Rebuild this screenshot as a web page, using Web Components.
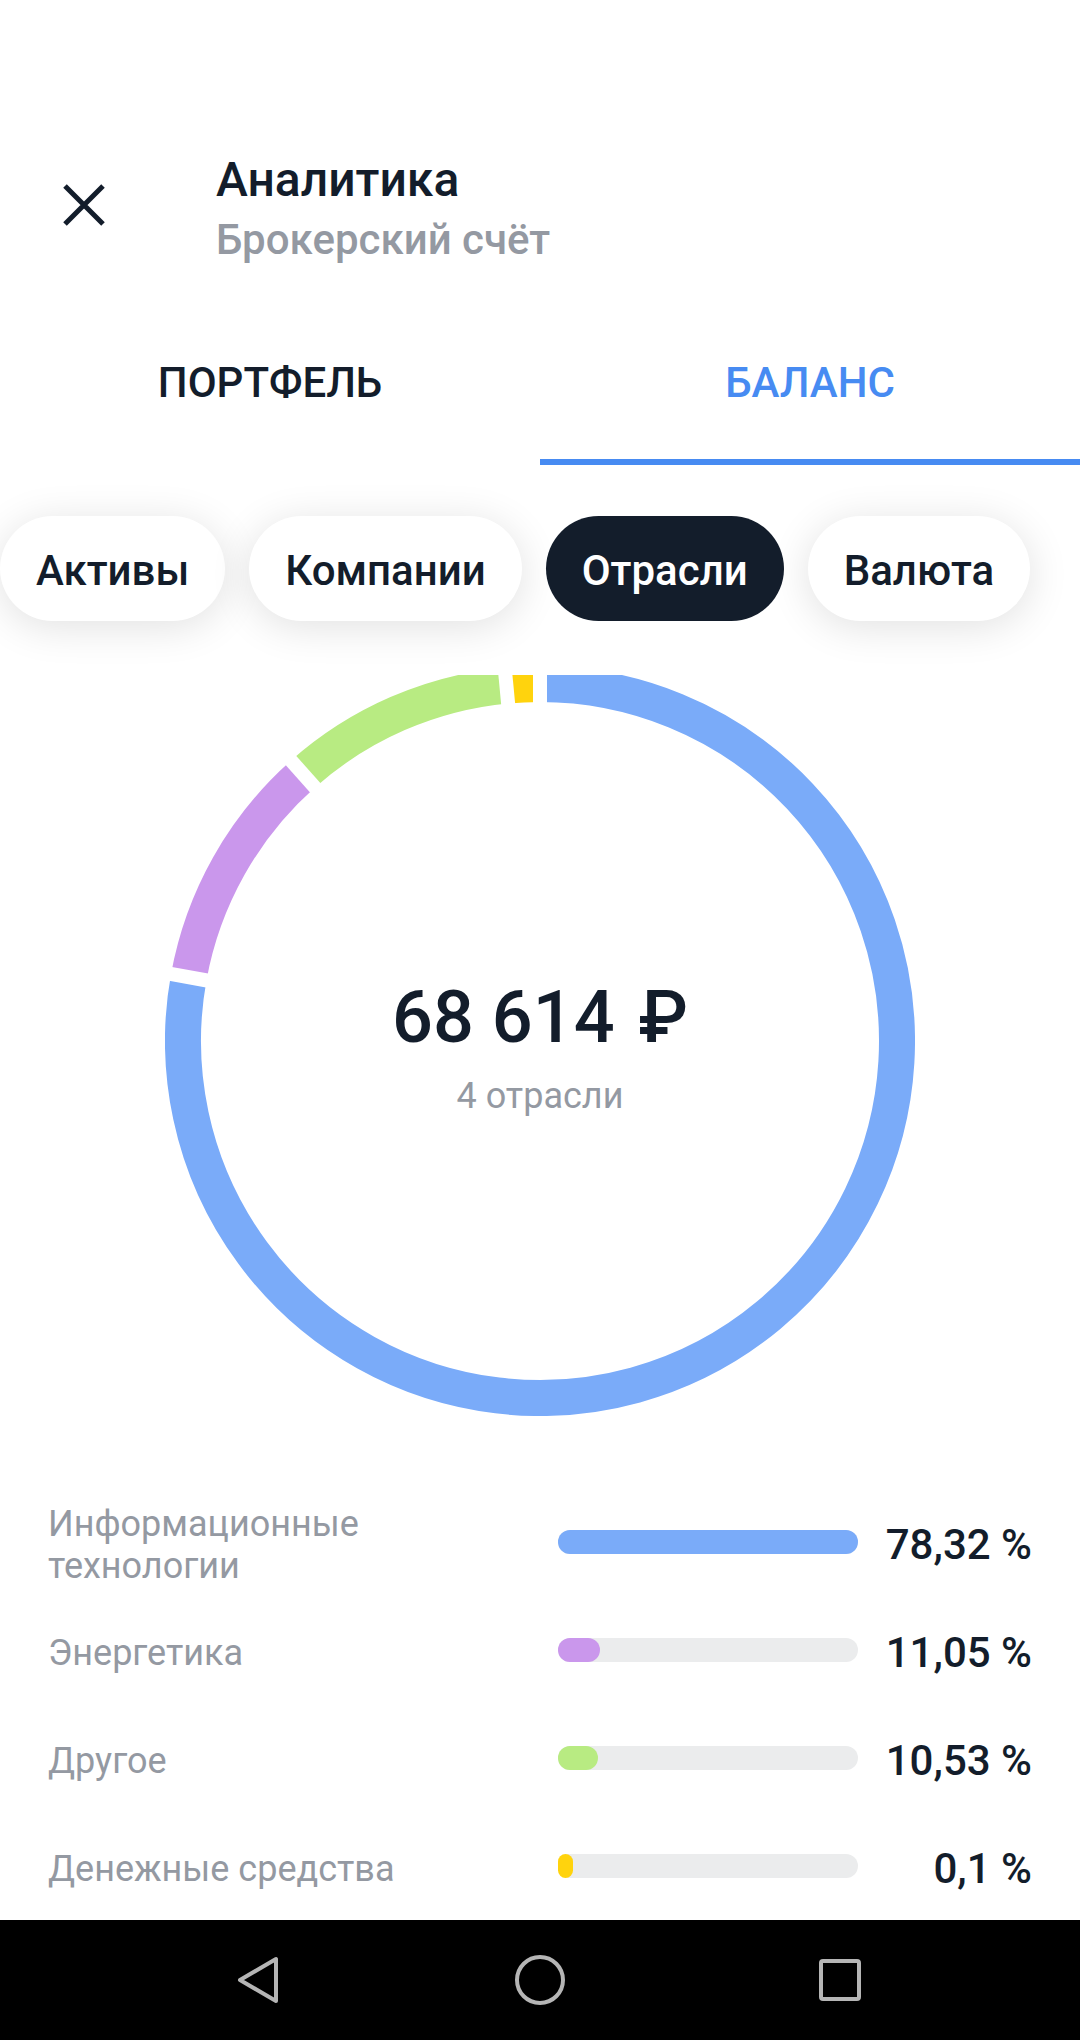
<!DOCTYPE html>
<html lang="ru">
<head>
<meta charset="utf-8">
<meta name="viewport" content="width=device-width, initial-scale=1">
<title>Аналитика</title>
<style>
  body {
    margin: 0;
    background: #fff;
    color: #131d2b;
    font-family: Roboto, "Noto Sans", sans-serif;
    --accent: #478bf2;
    --muted: #9499a2;
    --ink: #131d2b;
  }
  .currency {
    margin-left: 6px;
  }
</style>
</head>
<body>

<analytics-screen>
  <screen-header slot="header" heading="Аналитика" subheading="Брокерский счёт"></screen-header>

  <tab-bar slot="tabs">
    <tab-item>ПОРТФЕЛЬ</tab-item>
    <tab-item active>БАЛАНС</tab-item>
  </tab-bar>

  <chip-list slot="filters">
    <filter-chip>Активы</filter-chip>
    <filter-chip>Компании</filter-chip>
    <filter-chip active>Отрасли</filter-chip>
    <filter-chip>Валюта</filter-chip>
  </chip-list>

  <donut-chart segments="280.3 #7aabf9, 38.1 #ca97ec, 36.2 #b8eb82, 5.4 #ffd30d">
    <span slot="total">68 614 <span class="currency">₽</span></span>
    <span slot="caption">4 отрасли</span>
  </donut-chart>

  <share-list>
    <share-row value="78.32" max="78.32" color="#7aabf9" percent="78,32 %">Информационные технологии</share-row>
    <share-row value="11.05" max="78.32" color="#ca97ec" percent="11,05 %">Энергетика</share-row>
    <share-row value="10.53" max="78.32" color="#b8eb82" percent="10,53 %">Другое</share-row>
    <share-row value="0.1" max="78.32" color="#ffd30d" percent="0,1 %">Денежные средства</share-row>
  </share-list>

  <system-nav slot="nav"></system-nav>
</analytics-screen>

<script>
const createTemplate = (html) => {
  const template = document.createElement("template");
  template.innerHTML = html;
  return template;
};

class BaseComponent extends HTMLElement {
  constructor() {
    super();
    const shadowRoot = this.attachShadow({ mode: "open" });
    shadowRoot.appendChild(this.constructor.template.content.cloneNode(true));
  }
}

class AnalyticsScreen extends BaseComponent {
  static template = createTemplate(`
    <style>
      :host {
        display: flex;
        flex-direction: column;
        min-height: 100vh;
      }
      main {
        flex: 1;
      }
    </style>
    <slot name="header"></slot>
    <slot name="tabs"></slot>
    <slot name="filters"></slot>
    <main><slot></slot></main>
    <slot name="nav"></slot>
  `);
}

class ScreenHeader extends BaseComponent {
  static template = createTemplate(`
    <style>
      :host {
        display: block;
      }
      header {
        display: flex;
        align-items: flex-start;
        gap: 96px;
        padding: 150px 48px 0;
      }
      button {
        display: flex;
        align-items: center;
        justify-content: center;
        width: 72px;
        height: 110px;
        padding: 0;
        border: 0;
        background: none;
        color: inherit;
        cursor: pointer;
      }
      h1, p {
        margin: 0;
        font-weight: 500;
        line-height: 60px;
      }
      h1 {
        font-size: 48px;
      }
      p {
        font-size: 42px;
        color: var(--muted);
      }
    </style>
    <header>
      <button type="button" aria-label="Закрыть">
        <svg width="42" height="42" viewBox="0 0 42 42" fill="none" stroke="currentColor" stroke-width="5">
          <path d="M2 2l38 38M40 2L2 40"/>
        </svg>
      </button>
      <div>
        <h1></h1>
        <p></p>
      </div>
    </header>
  `);

  connectedCallback() {
    this.shadowRoot.querySelector("h1").textContent = this.getAttribute("heading");
    this.shadowRoot.querySelector("p").textContent = this.getAttribute("subheading");
  }
}

class TabBar extends BaseComponent {
  static template = createTemplate(`
    <style>
      :host {
        display: block;
        margin-top: 36px;
      }
      nav {
        display: flex;
      }
      ::slotted(tab-item) {
        flex: 1;
      }
    </style>
    <nav><slot></slot></nav>
  `);
}

class TabItem extends BaseComponent {
  static template = createTemplate(`
    <style>
      :host {
        display: block;
      }
      button {
        display: block;
        width: 100%;
        padding: 52px 0;
        border: 0;
        border-bottom: 6px solid transparent;
        background: none;
        color: inherit;
        font: 500 42px/49px Roboto, sans-serif;
        cursor: pointer;
      }
      :host([active]) button {
        color: var(--accent);
        border-bottom-color: var(--accent);
      }
    </style>
    <button type="button"><slot></slot></button>
  `);
}

class ChipList extends BaseComponent {
  static template = createTemplate(`
    <style>
      :host {
        display: flex;
        gap: 24px;
        padding: 51px 0 54px;
        overflow-x: auto;
        scrollbar-width: none;
      }
    </style>
    <slot></slot>
  `);
}

class FilterChip extends BaseComponent {
  static template = createTemplate(`
    <style>
      :host {
        display: block;
        flex: none;
      }
      button {
        display: block;
        padding: 30px 36px 26px;
        border: 0;
        border-radius: 53px;
        background: #fff;
        box-shadow: 0 6px 42px rgba(0, 0, 0, 0.12);
        color: inherit;
        font: 500 42px/49px Roboto, sans-serif;
        white-space: nowrap;
        cursor: pointer;
      }
      :host([active]) {
        z-index: 1;
      }
      :host([active]) button {
        background: var(--ink);
        box-shadow: none;
        color: #fff;
      }
    </style>
    <button type="button"><slot></slot></button>
  `);
}

// segments: comma separated "degrees color" pairs, clockwise from the top
class DonutChart extends BaseComponent {
  static template = createTemplate(`
    <style>
      :host {
        display: grid;
        justify-items: center;
        padding: 0 165px;
      }
      svg, .label {
        grid-area: 1 / 1;
      }
      svg {
        display: block;
        width: 100%;
        max-width: 750px;
      }
      .label {
        align-self: center;
        display: flex;
        flex-direction: column;
        align-items: center;
        padding-top: 16px;
        text-align: center;
      }
      .total {
        font-size: 72px;
        font-weight: 500;
        line-height: 84px;
        white-space: nowrap;
      }
      .caption {
        font-size: 36px;
        line-height: 72px;
        color: var(--muted);
      }
    </style>
    <svg viewBox="0 9 750 741" fill="none" aria-hidden="true"></svg>
    <div class="label">
      <div class="total"><slot name="total"></slot></div>
      <div class="caption"><slot name="caption"></slot></div>
    </div>
  `);

  connectedCallback() {
    const center = 375;
    const radius = 357;
    const point = (degrees, r) => {
      const angle = (degrees * Math.PI) / 180;
      return `${center + r * Math.sin(angle)} ${center - r * Math.cos(angle)}`;
    };

    let start = 0;
    let arcs = "";
    let gaps = "";
    this.getAttribute("segments").split(",").forEach((segment) => {
      const [degrees, color] = segment.trim().split(" ");
      const end = start + Number(degrees);
      const large = end - start > 180 ? 1 : 0;
      arcs += `<path d="M${point(start, radius)}A${radius} ${radius} 0 ${large} 1 ${point(end, radius)}" stroke="${color}" stroke-width="36"/>`;
      gaps += `<path d="M${point(start, 330)}L${point(start, 384)}" stroke="#fff" stroke-width="14"/>`;
      start = end;
    });
    this.shadowRoot.querySelector("svg").innerHTML = arcs + gaps;
  }
}

class ShareList extends BaseComponent {
  static template = createTemplate(`
    <style>
      :host {
        display: flex;
        flex-direction: column;
        gap: 6px;
        padding: 78px 48px 0;
      }
    </style>
    <slot></slot>
  `);

  connectedCallback() {
    this.setAttribute("role", "list");
  }
}

class ShareRow extends BaseComponent {
  static template = createTemplate(`
    <style>
      :host {
        display: grid;
        grid-template-columns: 1fr 300px 174px;
        align-items: center;
        min-height: 102px;
      }
      .name {
        padding-right: 24px;
        font-size: 36px;
        line-height: 42px;
        color: var(--muted);
      }
      .track {
        height: 24px;
        margin-bottom: 6px;
        border-radius: 12px;
        background: #ebeced;
      }
      .fill {
        min-width: 15px;
        height: 24px;
        border-radius: 12px;
      }
      .percent {
        padding-bottom: 2px;
        font-size: 42px;
        font-weight: 500;
        line-height: 49px;
        text-align: right;
        white-space: nowrap;
      }
    </style>
    <div class="name"><slot></slot></div>
    <div class="track"><div class="fill"></div></div>
    <div class="percent"></div>
  `);

  connectedCallback() {
    const fill = this.shadowRoot.querySelector(".fill");
    const value = Number(this.getAttribute("value"));
    const max = Number(this.getAttribute("max"));

    this.setAttribute("role", "listitem");
    fill.style.width = `${(value / max) * 100}%`;
    fill.style.backgroundColor = this.getAttribute("color");
    this.shadowRoot.querySelector(".percent").textContent = this.getAttribute("percent");
  }
}

class SystemNav extends BaseComponent {
  static template = createTemplate(`
    <style>
      :host {
        display: block;
        background: #000;
        color: #b5b5b5;
      }
      nav {
        display: flex;
        padding: 0 90px;
      }
      button {
        flex: 1;
        display: flex;
        align-items: center;
        justify-content: center;
        height: 120px;
        padding: 0;
        border: 0;
        background: none;
        color: inherit;
        cursor: pointer;
      }
    </style>
    <nav>
      <button type="button" aria-label="Назад">
        <svg width="84" height="84" viewBox="0 0 84 84" fill="none" stroke="currentColor" stroke-width="4" stroke-linejoin="round">
          <path d="M78 21v42L42 42z"/>
        </svg>
      </button>
      <button type="button" aria-label="Домой">
        <svg width="84" height="84" viewBox="0 0 84 84" fill="none" stroke="currentColor" stroke-width="4">
          <circle cx="42" cy="42" r="23"/>
        </svg>
      </button>
      <button type="button" aria-label="Недавние">
        <svg width="84" height="84" viewBox="0 0 84 84" fill="none" stroke="currentColor" stroke-width="4">
          <rect x="23" y="23" width="38" height="38" rx="2"/>
        </svg>
      </button>
    </nav>
  `);
}

window.customElements.define("analytics-screen", AnalyticsScreen);
window.customElements.define("screen-header", ScreenHeader);
window.customElements.define("tab-bar", TabBar);
window.customElements.define("tab-item", TabItem);
window.customElements.define("chip-list", ChipList);
window.customElements.define("filter-chip", FilterChip);
window.customElements.define("donut-chart", DonutChart);
window.customElements.define("share-list", ShareList);
window.customElements.define("share-row", ShareRow);
window.customElements.define("system-nav", SystemNav);
</script>
</body>
</html>
